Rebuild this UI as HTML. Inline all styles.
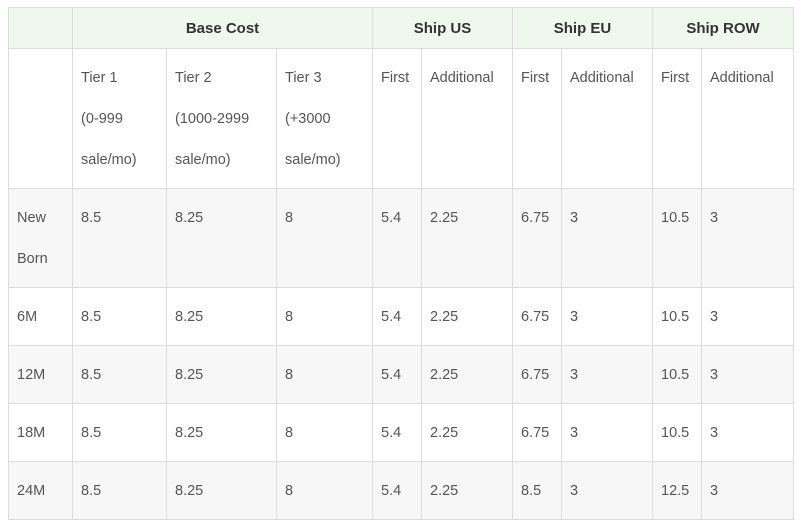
<!DOCTYPE html>
<html><head><style>
html,body{margin:0;padding:0;background:#fff;width:801px;height:528px;overflow:hidden}
table{position:absolute;left:8px;top:7px;border-collapse:collapse;table-layout:fixed;font-family:"Liberation Sans",sans-serif;font-size:14.5px;color:#555}
td,th{border:1px solid #dcdcdc;padding:9px 0 0 8px;vertical-align:top;line-height:41px;text-align:left;box-sizing:border-box}
th{background:#eef8ec;color:#333;font-size:15px;text-align:center;padding:0;vertical-align:middle;height:41px;line-height:39px}
tr.g td{background:#f7f7f7}
</style></head><body>
<table>
<colgroup><col style="width:64px"><col style="width:94px"><col style="width:110px"><col style="width:96px"><col style="width:49px"><col style="width:91px"><col style="width:49px"><col style="width:91px"><col style="width:49px"><col style="width:92px"></colgroup>
<tr style="height:41px"><th></th><th colspan="3">Base Cost</th><th colspan="2">Ship US</th><th colspan="2">Ship EU</th><th colspan="2">Ship ROW</th></tr>
<tr style="height:140px"><td></td><td>Tier 1<br>(0-999<br>sale/mo)</td><td>Tier 2<br>(1000-2999<br>sale/mo)</td><td>Tier 3<br>(+3000<br>sale/mo)</td><td>First</td><td>Additional</td><td>First</td><td>Additional</td><td>First</td><td>Additional</td></tr>
<tr class="g" style="height:99px"><td>New<br>Born</td><td>8.5</td><td>8.25</td><td>8</td><td>5.4</td><td>2.25</td><td>6.75</td><td>3</td><td>10.5</td><td>3</td></tr>
<tr style="height:58px"><td>6M</td><td>8.5</td><td>8.25</td><td>8</td><td>5.4</td><td>2.25</td><td>6.75</td><td>3</td><td>10.5</td><td>3</td></tr>
<tr class="g" style="height:58px"><td>12M</td><td>8.5</td><td>8.25</td><td>8</td><td>5.4</td><td>2.25</td><td>6.75</td><td>3</td><td>10.5</td><td>3</td></tr>
<tr style="height:58px"><td>18M</td><td>8.5</td><td>8.25</td><td>8</td><td>5.4</td><td>2.25</td><td>6.75</td><td>3</td><td>10.5</td><td>3</td></tr>
<tr class="g" style="height:58px"><td>24M</td><td>8.5</td><td>8.25</td><td>8</td><td>5.4</td><td>2.25</td><td>8.5</td><td>3</td><td>12.5</td><td>3</td></tr>
</table>
</body></html>
